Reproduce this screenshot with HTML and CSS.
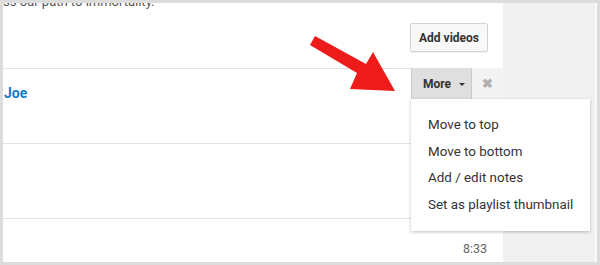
FILE: index.html
```html
<!DOCTYPE html>
<html lang="en">
<head>
    <meta charset="UTF-8">
    <title>Playlist edit</title>
    <link rel="stylesheet" href="styles.css">
</head>
<body>
    <div class="frame">
        <div class="main">
            <div class="header">
                <p class="desc">ss our path to immortality.</p>
                <button class="btn add-videos">Add videos</button>
            </div>
            <div class="row">
                <a class="title">Joe</a>
                <div class="actions">
                    <button class="btn more">More <span class="caret"></span></button>
                    <button class="btn remove">&#x2716;</button>
                    <ul class="menu">
                        <li>Move to top</li>
                        <li>Move to bottom</li>
                        <li>Add / edit notes</li>
                        <li>Set as playlist thumbnail</li>
                    </ul>
                </div>
            </div>
            <div class="row"></div>
            <div class="row last">
                <span class="duration">8:33</span>
            </div>
        </div>
        <div class="side"></div>

        <!-- callout arrow -->
        <svg class="arrow" width="100" height="70" viewBox="0 0 100 70">
            <polygon points="10,6 5,15 52,43 45,59 90,61 68,22 61,34" fill="#ee1b1b"/>
        </svg>
    </div>
</body>
</html>
```

FILE: styles.css
```css
body {
    margin: 0;
    background-color: #dcdcdc;
    font-family: Roboto, "Liberation Sans", Arial, sans-serif;
    color: #333;
}
.frame {
    position: relative;
    display: flex;
    height: 259px;
    margin: 3px 3px 3px 3px;
    overflow: hidden;
}
.main {
    width: 500px;
    background-color: #fff;
}
.side {
    flex: 1;
    background-color: #f1f1f1;
    border-right: 2px solid #f9f9f9;
}
.header {
    height: 65px;
    display: flex;
    flex-direction: column;
    align-items: flex-end;
}
.desc {
    align-self: flex-start;
    margin: -9px 0 0 0;
    font-size: 13px;
    line-height: 16px;
    color: #555;
}
.btn {
    font-family: inherit;
    font-size: 12px;
    font-weight: bold;
    color: #333;
    cursor: pointer;
}
.add-videos {
    margin: 13px 15px 0 0;
    height: 29px;
    width: 78px;
    padding: 0;
    background-color: #f8f8f8;
    border: 1px solid #d3d3d3;
    border-radius: 2px;
    box-shadow: 0 1px 0 rgba(0,0,0,0.05);
}
.row {
    height: 74px;
    border-top: 1px solid #e2e2e2;
    display: flex;
    justify-content: space-between;
    align-items: flex-start;
}
.title {
    margin: 16px 0 0 1px;
    font-size: 14px;
    font-weight: bold;
    color: #167ac6;
}
.actions {
    position: relative;
    display: flex;
    margin-top: -1px;
}
.more {
    width: 61px;
    height: 31px;
    background-color: #dfdfdf;
    border: none;
    border-left: 1px solid #c9c9c9;
    border-right: 1px solid #c9c9c9;
    text-align: left;
    padding: 0 0 0 11px;
}
.caret {
    display: inline-block;
    margin-left: 5px;
    vertical-align: middle;
    border-left: 3.5px solid transparent;
    border-right: 3.5px solid transparent;
    border-top: 3.5px solid #333;
}
.remove {
    width: 31px;
    height: 31px;
    padding: 0;
    background-color: #f3f3f3;
    border: none;
    color: #b0b0b0;
    font-size: 13px;
}
.menu {
    position: absolute;
    top: 31px;
    left: 0;
    width: 179px;
    margin: 0;
    padding: 13px 0 12px;
    list-style: none;
    background-color: #fff;
    box-shadow: 0 1px 3px rgba(0,0,0,0.25);
    z-index: 2;
}
.menu li {
    padding-left: 17px;
    font-size: 13.4px;
    line-height: 26.7px;
    color: #333;
}
.last {
    justify-content: flex-end;
}
.duration {
    margin: 22px 16px 0 0;
    font-size: 12.5px;
    color: #666;
}
.arrow {
    position: absolute;
    left: 302px;
    top: 27px;
}
```
